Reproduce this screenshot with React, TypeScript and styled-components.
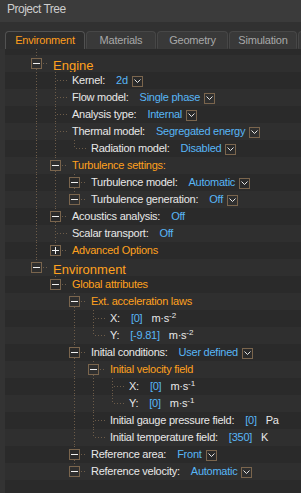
import React from "react";
import styled, { createGlobalStyle } from "styled-components";

const DOT = "#6d5c49";
const BOX = "#7a654d";

const GlobalStyle = createGlobalStyle`
  html, body { margin: 0; padding: 0; background: #333333; }
  body { font-family: "Liberation Sans", Arial, sans-serif; overflow: hidden; }
  #root { width: 301px; height: 493px; }
`;

const Panel = styled.div`
  width: 301px;
  height: 493px;
  display: flex;
  flex-direction: column;
  background: #333333;
  overflow: hidden;
`;

const TitleBar = styled.div`
  height: 22px;
  flex: none;
  box-sizing: border-box;
  background: #3b3b3b;
  color: #cdcdcd;
  font-size: 12px;
  line-height: 19px;
  padding-left: 7px;
  letter-spacing: -0.5px;
`;

const TabBar = styled.div`
  height: 27px;
  flex: none;
  display: flex;
  align-items: flex-end;
  gap: 1px;
  padding-left: 5px;
  background: #313131;
  overflow: hidden;
`;

const Tab = styled.div<{ $active?: boolean; $w: number }>`
  width: ${(p) => p.$w}px;
  flex: none;
  height: 18px;
  box-sizing: border-box;
  border: 1px solid ${(p) => (p.$active ? "#525252" : "#474747")};
  border-bottom: ${(p) => (p.$active ? "none" : "1px solid #3a3a3a")};
  border-radius: 4px 4px 0 0;
  background: ${(p) => (p.$active ? "#2d2d2d" : "#393939")};
  color: ${(p) => (p.$active ? "#ff9d1c" : "#a8a8a8")};
  font-size: 11px;
  line-height: 17px;
  letter-spacing: -0.2px;
  text-align: center;
  white-space: nowrap;
`;

const Tree = styled.div`
  flex: 1;
  margin-left: 5px;
  background: #2a2a2a;
  display: flex;
  flex-direction: column;
`;

const TopRow = styled.div`
  height: 6px;
  display: flex;
  padding-left: 22px;
`;

const Row = styled.div<{ $odd: boolean }>`
  height: 17px;
  flex: none;
  display: flex;
  align-items: center;
  padding-left: 22px;
  background: ${(p) => (p.$odd ? "#2f2f2f" : "#2a2a2a")};
  white-space: nowrap;
`;

const GuideSvg = styled.svg`
  flex: none;
  display: block;
`;

type Tone = "header" | "group" | "field";

const Label = styled.span<{ $tone: Tone }>`
  margin-left: 5px;
  font-size: ${(p) => (p.$tone === "header" ? 13 : 11)}px;
  line-height: 17px;
  letter-spacing: ${(p) => (p.$tone === "header" ? "0px" : "-0.25px")};
  color: ${(p) => (p.$tone === "field" ? "#e8e8e8" : "#ffa11e")};
  align-self: ${(p) => (p.$tone === "header" ? "flex-start" : "center")};
  margin-top: ${(p) => (p.$tone === "header" ? 2 : 0)}px;
`;

const Value = styled.span`
  margin-left: 11px;
  font-size: 11px;
  line-height: 17px;
  letter-spacing: -0.25px;
  color: #58b6f6;
`;

const Unit = styled.span`
  margin-left: 9px;
  font-size: 11px;
  line-height: 17px;
  letter-spacing: -0.25px;
  color: #e8e8e8;
`;

const Sup = styled.sup`
  font-size: 8px;
  line-height: 0;
  vertical-align: 4px;
  letter-spacing: 0;
`;

const DropSvg = styled.svg`
  flex: none;
  display: block;
  margin-left: 4px;
  margin-top: 1px;
`;

interface TNode {
  label: string;
  tone?: Tone;
  value?: string;
  drop?: boolean;
  unit?: React.ReactNode;
  box?: "minus" | "plus";
  children?: TNode[];
}

const ms2 = (
  <>
    m·s<Sup>-2</Sup>
  </>
);
const ms1 = (
  <>
    m·s<Sup>-1</Sup>
  </>
);

const data: TNode[] = [
  {
    label: "Engine",
    tone: "header",
    box: "minus",
    children: [
      { label: "Kernel:", value: "2d", drop: true },
      { label: "Flow model:", value: "Single phase", drop: true },
      { label: "Analysis type:", value: "Internal", drop: true },
      {
        label: "Thermal model:",
        value: "Segregated energy",
        drop: true,
        children: [{ label: "Radiation model:", value: "Disabled", drop: true }],
      },
      {
        label: "Turbulence settings:",
        tone: "group",
        box: "minus",
        children: [
          { label: "Turbulence model:", value: "Automatic", drop: true, box: "minus" },
          { label: "Turbulence generation:", value: "Off", drop: true, box: "minus" },
        ],
      },
      { label: "Acoustics analysis:", value: "Off", box: "minus" },
      { label: "Scalar transport:", value: "Off" },
      { label: "Advanced Options", tone: "group", box: "plus" },
    ],
  },
  {
    label: "Environment",
    tone: "header",
    box: "minus",
    children: [
      {
        label: "Global attributes",
        tone: "group",
        box: "minus",
        children: [
          {
            label: "Ext. acceleration laws",
            tone: "group",
            box: "minus",
            children: [
              { label: "X:", value: "[0]", unit: ms2 },
              { label: "Y:", value: "[-9.81]", unit: ms2 },
            ],
          },
          {
            label: "Initial conditions:",
            value: "User defined",
            drop: true,
            box: "minus",
            children: [
              {
                label: "Initial velocity field",
                tone: "group",
                box: "minus",
                children: [
                  { label: "X:", value: "[0]", unit: ms1 },
                  { label: "Y:", value: "[0]", unit: ms1 },
                ],
              },
              { label: "Initial gauge pressure field:", value: "[0]", unit: "Pa" },
              { label: "Initial temperature field:", value: "[350]", unit: "K" },
            ],
          },
          { label: "Reference area:", value: "Front", drop: true, box: "minus" },
          { label: "Reference velocity:", value: "Automatic", drop: true, box: "minus" },
        ],
      },
    ],
  },
];

interface FlatRow {
  node: TNode;
  guides: boolean[];
  last: boolean;
}

function flatten(nodes: TNode[], guides: boolean[], out: FlatRow[]): FlatRow[] {
  nodes.forEach((n, i) => {
    const last = i === nodes.length - 1;
    out.push({ node: n, guides, last });
    if (n.children) flatten(n.children, [...guides, !last], out);
  });
  return out;
}

const Guide = ({ on, h = 17 }: { on: boolean; h?: number }) => (
  <GuideSvg width={19} height={h} viewBox={`0 0 19 ${h}`}>
    {on && <line x1={9.5} y1={0} x2={9.5} y2={h} stroke={DOT} strokeDasharray="1 2" />}
  </GuideSvg>
);

const Connector = ({ last, box }: { last: boolean; box?: "minus" | "plus" }) => (
  <GuideSvg width={21} height={17} viewBox="0 0 21 17">
    {box ? (
      <>
        <line x1={9.5} y1={0} x2={9.5} y2={3} stroke={DOT} strokeDasharray="1 2" />
        {!last && <line x1={9.5} y1={14} x2={9.5} y2={17} stroke={DOT} strokeDasharray="1 2" />}
        <line x1={16} y1={8.5} x2={21} y2={8.5} stroke={DOT} strokeDasharray="1 2" />
        <rect x={4.5} y={3.5} width={10} height={10} fill="none" stroke={BOX} />
        <line x1={6} y1={8.5} x2={13} y2={8.5} stroke="#f2f2f2" />
        {box === "plus" && <line x1={9.5} y1={5} x2={9.5} y2={12} stroke="#f2f2f2" />}
      </>
    ) : (
      <>
        <line x1={9.5} y1={0} x2={9.5} y2={last ? 9 : 17} stroke={DOT} strokeDasharray="1 2" />
        <line x1={11} y1={8.5} x2={21} y2={8.5} stroke={DOT} strokeDasharray="1 2" />
      </>
    )}
  </GuideSvg>
);

const DropButton = () => (
  <DropSvg width={11} height={11} viewBox="0 0 11 11">
    <rect x={0.5} y={0.5} width={10} height={10} fill="none" stroke={BOX} />
    <polyline points="2.5,3.5 5.5,6.5 8.5,3.5" fill="none" stroke="#e6e6e6" strokeWidth={1} />
  </DropSvg>
);

const tabs = [
  { label: "Environment", w: 80, active: true },
  { label: "Materials", w: 70 },
  { label: "Geometry", w: 71 },
  { label: "Simulation", w: 68 },
  { label: "", w: 40 },
];

export default function App() {
  const rows = flatten(data, [], []);
  return (
    <>
      <GlobalStyle />
      <Panel>
        <TitleBar>Project Tree</TitleBar>
        <TabBar>
          {tabs.map((t, i) => (
            <Tab key={i} $w={t.w} $active={t.active}>
              {t.label}
            </Tab>
          ))}
        </TabBar>
        <Tree>
          <TopRow>
            <Guide on h={6} />
          </TopRow>
          {rows.map((r, i) => {
            const n = r.node;
            return (
              <Row key={i} $odd={i % 2 === 0}>
                {r.guides.map((g, j) => (
                  <Guide key={j} on={g} />
                ))}
                <Connector last={r.last} box={n.box} />
                <Label $tone={n.tone ?? "field"}>{n.label}</Label>
                {n.value && <Value>{n.value}</Value>}
                {n.drop && <DropButton />}
                {n.unit && <Unit>{n.unit}</Unit>}
              </Row>
            );
          })}
        </Tree>
      </Panel>
    </>
  );
}
